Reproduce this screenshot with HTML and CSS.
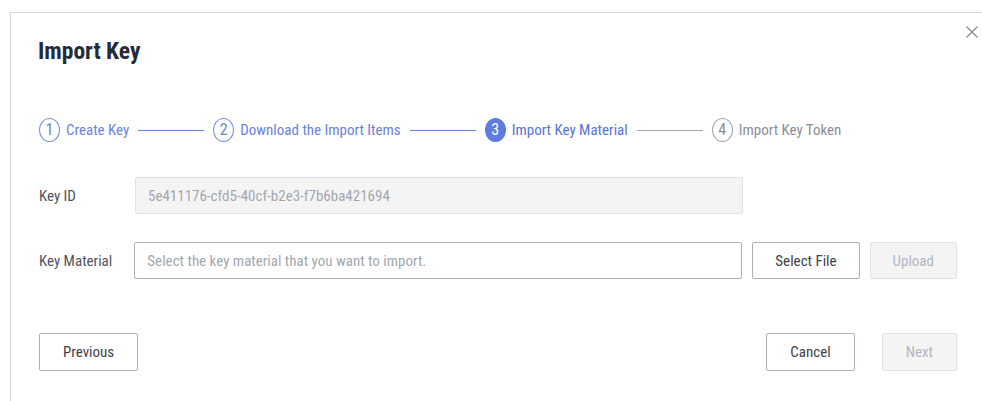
FILE: index.html
```html
<!DOCTYPE html>
<html lang="en">
<head>
<meta charset="utf-8">
<title>Import Key</title>
<link rel="stylesheet" href="styles.css">
</head>
<body>
<div class="dialog">
  <button class="close" type="button" aria-label="Close">
    <svg viewBox="0 0 14 14" width="14" height="14"><path d="M1.5 1.5 L12.5 12.5 M12.5 1.5 L1.5 12.5" /></svg>
  </button>
  <h1 class="title">Import Key</h1>

  <ol class="steps">
    <li class="step done"><span class="num">1</span><span class="label">Create Key</span></li>
    <li class="line done"></li>
    <li class="step done"><span class="num">2</span><span class="label">Download the Import Items</span></li>
    <li class="line done"></li>
    <li class="step active"><span class="num">3</span><span class="label">Import Key Material</span></li>
    <li class="line"></li>
    <li class="step"><span class="num">4</span><span class="label">Import Key Token</span></li>
  </ol>

  <div class="form">
    <div class="row">
      <label class="field-label" for="key-id">Key ID</label>
      <input class="input" id="key-id" type="text" value="5e411176-cfd5-40cf-b2e3-f7b6ba421694" disabled>
    </div>
    <div class="row">
      <label class="field-label" for="key-material">Key Material</label>
      <input class="input" id="key-material" type="text" placeholder="Select the key material that you want to import.">
      <button class="btn" type="button">Select File</button>
      <button class="btn" type="button" disabled>Upload</button>
    </div>
  </div>

  <div class="footer">
    <button class="btn btn-tall" type="button">Previous</button>
    <div class="footer-right">
      <button class="btn btn-tall" type="button">Cancel</button>
      <button class="btn btn-tall" type="button" disabled>Next</button>
    </div>
  </div>
</div>
</body>
</html>
```

FILE: styles.css
```css
html, body {
  margin: 0;
  padding: 0;
  background: #fff;
  overflow: hidden;
}

body {
  font-family: "Roboto Condensed", "Liberation Sans", Arial, sans-serif;
  font-size: 15px;
  color: #252b3a;
}

.dialog {
  position: relative;
  box-sizing: border-box;
  width: 980px;
  height: 389px;
  margin: 12px 0 0 10px;
  padding: 22px 32px 0 27px;
  border: 1px solid #d6d6d6;
  border-bottom: 0;
  background: #fff;
}

.close {
  position: absolute;
  top: 11px;
  right: 9px;
  width: 16px;
  height: 16px;
  padding: 1px;
  border: 0;
  background: none;
  cursor: pointer;
}

.close svg {
  display: block;
  stroke: #8a8e99;
  stroke-width: 1.4;
  fill: none;
}

.title {
  margin: 0;
  font-size: 23.5px;
  line-height: 32px;
  font-weight: 700;
  color: #252b3a;
}

/* wizard progress */
.steps {
  display: flex;
  align-items: center;
  list-style: none;
  margin: 51px 0 0 1px;
  padding: 0;
  height: 24px;
}

.step {
  display: flex;
  align-items: center;
  gap: 6px;
  color: #8a8e99;
}

.num {
  box-sizing: border-box;
  width: 21px;
  height: 24px;
  border: 1px solid #a3a6ae;
  border-radius: 50%;
  display: flex;
  align-items: center;
  justify-content: center;
  font-size: 16px;
  line-height: 1;
}

.label {
  line-height: 24px;
  white-space: nowrap;
}

.step.done {
  color: #6a84dc;
}

.step.done .num {
  border-color: #7890e0;
}

.step.active {
  color: #5874d8;
}

.step.active .num {
  background: #5e7ce0;
  border-color: #5e7ce0;
  color: #fff;
}

.line {
  width: 66px;
  height: 1px;
  margin: 0 9px;
  background: #a3a6ae;
}

.line.done {
  background: #6a84dc;
}

/* form rows */
.form {
  margin-top: 35px;
  display: flex;
  flex-direction: column;
  gap: 28px;
}

.row {
  display: flex;
  align-items: center;
  gap: 10px;
}

.field-label {
  width: 86px;
  padding-left: 1px;
  color: #4f5360;
  white-space: nowrap;
}

.input {
  flex: none;
  box-sizing: border-box;
  width: 608px;
  height: 37px;
  padding: 0 12px;
  font: inherit;
  color: #252b3a;
  border: 1px solid #adb0b8;
  border-radius: 2px;
  background: #fff;
  outline: none;
}

.input::placeholder {
  color: #a4a7af;
}

.input:disabled {
  background: #f4f4f5;
  border-color: #e2e3e6;
  color: #a4a7af;
}

.btn {
  flex: none;
  box-sizing: border-box;
  height: 37px;
  padding: 0 22px;
  font: inherit;
  color: #3e414a;
  background: #fff;
  border: 1px solid #adb0b8;
  border-radius: 2px;
  cursor: pointer;
  white-space: nowrap;
}

.btn:disabled {
  color: #b3b6bd;
  background: #f4f4f5;
  border-color: #e2e3e6;
  cursor: default;
}

.btn-tall {
  height: 38px;
  padding: 0 23px;
}

/* footer actions */
.footer {
  margin-top: 54px;
  display: flex;
  align-items: center;
  justify-content: space-between;
  padding-left: 1px;
}

.footer-right {
  display: flex;
  gap: 27px;
}
```
